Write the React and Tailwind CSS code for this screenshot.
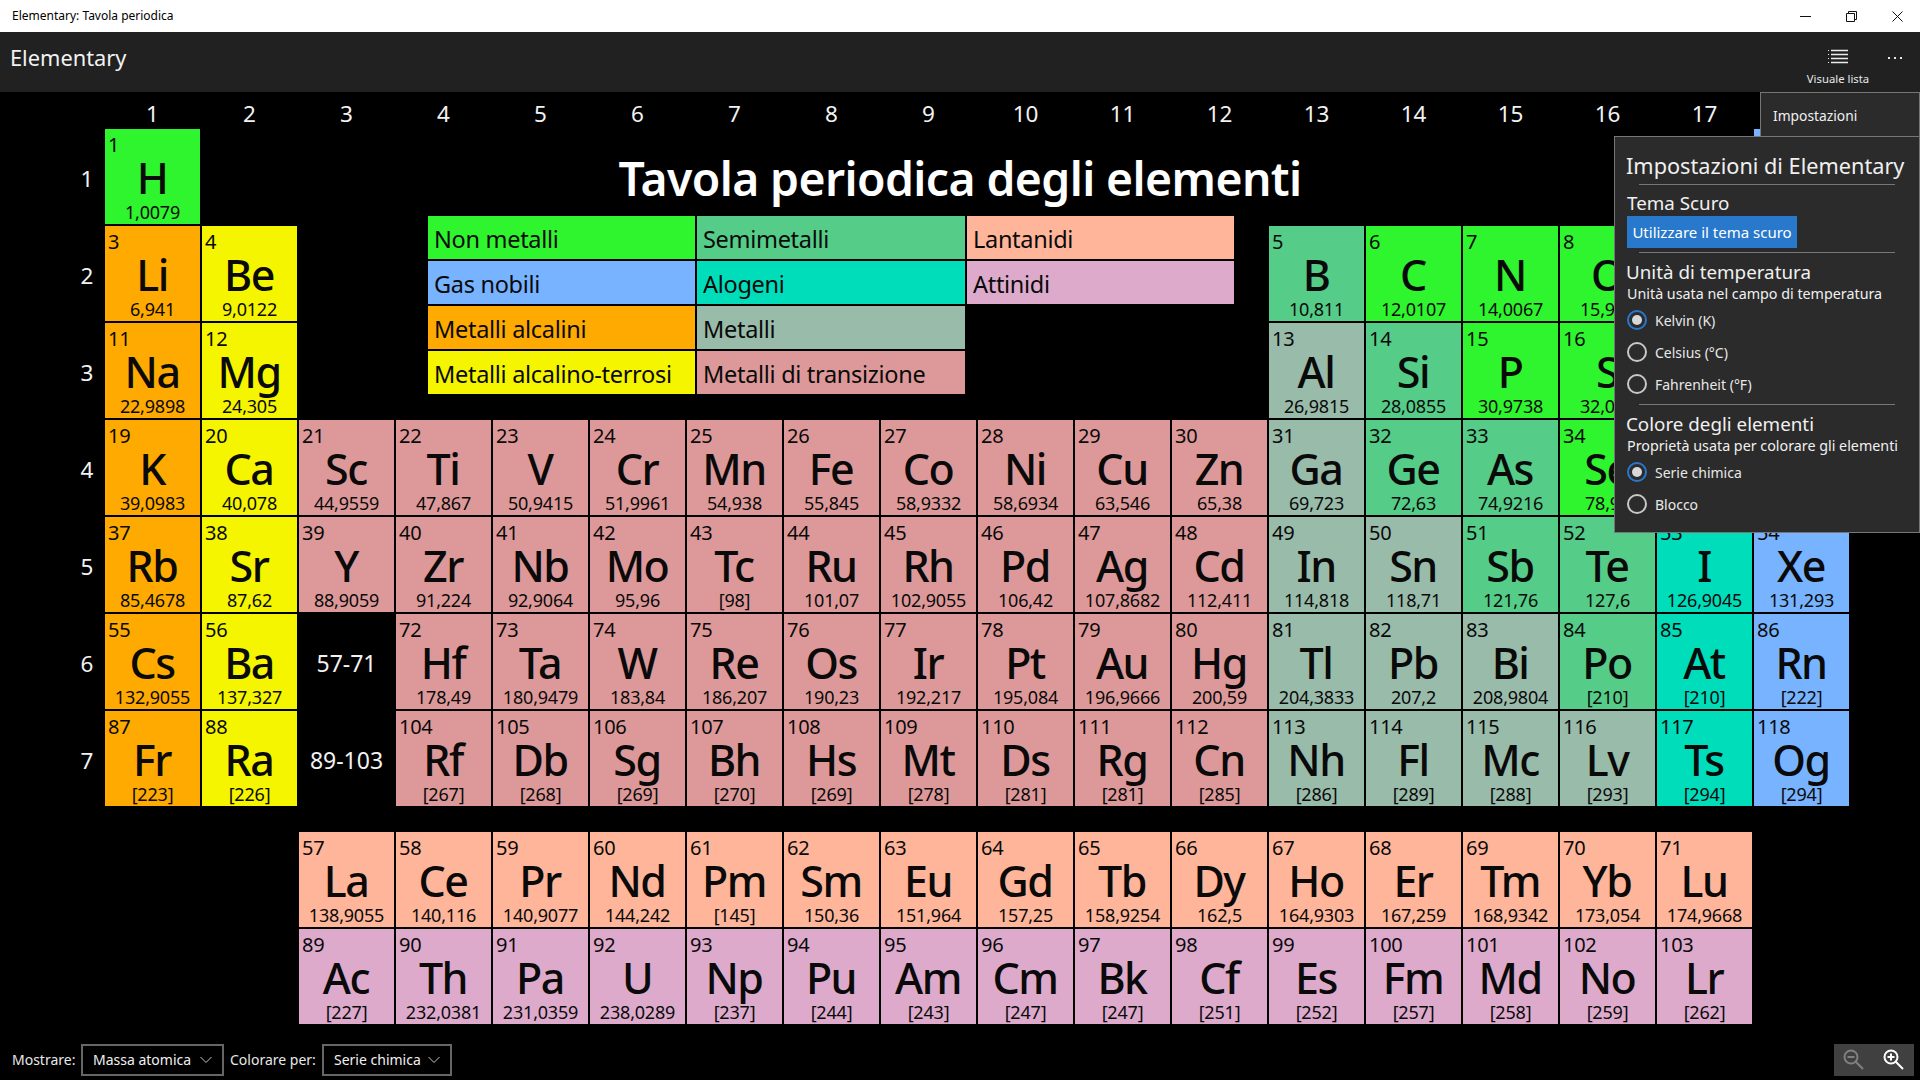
import React from 'react';

const BG = {
  n: 'bg-[#2ff52f]', g: 'bg-[#77b3ff]', a: 'bg-[#ffaa00]', e: 'bg-[#f5f500]',
  s: 'bg-[#55cc88]', h: 'bg-[#00ddbb]', m: 'bg-[#99bbaa]', t: 'bg-[#dd9999]',
  l: 'bg-[#ffb599]', c: 'bg-[#ddaacc]',
};

// [grid row, start column, first atomic number, "Sym mass cat|..."]
const BLOCKS = [
  [1, 1, 1, 'H 1,0079 n'],
  [1, 18, 2, 'He 4,0026 g'],
  [2, 1, 3, 'Li 6,941 a|Be 9,0122 e'],
  [2, 13, 5, 'B 10,811 s|C 12,0107 n|N 14,0067 n|O 15,999 n|F 18,9984 h|Ne 20,1797 g'],
  [3, 1, 11, 'Na 22,9898 a|Mg 24,305 e'],
  [3, 13, 13, 'Al 26,9815 m|Si 28,0855 s|P 30,9738 n|S 32,065 n|Cl 35,453 h|Ar 39,948 g'],
  [4, 1, 19, 'K 39,0983 a|Ca 40,078 e|Sc 44,9559 t|Ti 47,867 t|V 50,9415 t|Cr 51,9961 t|Mn 54,938 t|Fe 55,845 t|Co 58,9332 t|Ni 58,6934 t|Cu 63,546 t|Zn 65,38 t|Ga 69,723 m|Ge 72,63 s|As 74,9216 s|Se 78,96 n|Br 79,904 h|Kr 83,798 g'],
  [5, 1, 37, 'Rb 85,4678 a|Sr 87,62 e|Y 88,9059 t|Zr 91,224 t|Nb 92,9064 t|Mo 95,96 t|Tc [98] t|Ru 101,07 t|Rh 102,9055 t|Pd 106,42 t|Ag 107,8682 t|Cd 112,411 t|In 114,818 m|Sn 118,71 m|Sb 121,76 s|Te 127,6 s|I 126,9045 h|Xe 131,293 g'],
  [6, 1, 55, 'Cs 132,9055 a|Ba 137,327 e'],
  [6, 4, 72, 'Hf 178,49 t|Ta 180,9479 t|W 183,84 t|Re 186,207 t|Os 190,23 t|Ir 192,217 t|Pt 195,084 t|Au 196,9666 t|Hg 200,59 t|Tl 204,3833 m|Pb 207,2 m|Bi 208,9804 m|Po [210] s|At [210] h|Rn [222] g'],
  [7, 1, 87, 'Fr [223] a|Ra [226] e'],
  [7, 4, 104, 'Rf [267] t|Db [268] t|Sg [269] t|Bh [270] t|Hs [269] t|Mt [278] t|Ds [281] t|Rg [281] t|Cn [285] t|Nh [286] m|Fl [289] m|Mc [288] m|Lv [293] m|Ts [294] h|Og [294] g'],
  [9, 3, 57, 'La 138,9055 l|Ce 140,116 l|Pr 140,9077 l|Nd 144,242 l|Pm [145] l|Sm 150,36 l|Eu 151,964 l|Gd 157,25 l|Tb 158,9254 l|Dy 162,5 l|Ho 164,9303 l|Er 167,259 l|Tm 168,9342 l|Yb 173,054 l|Lu 174,9668 l'],
  [10, 3, 89, 'Ac [227] c|Th 232,0381 c|Pa 231,0359 c|U 238,0289 c|Np [237] c|Pu [244] c|Am [243] c|Cm [247] c|Bk [247] c|Cf [251] c|Es [252] c|Fm [257] c|Md [258] c|No [259] c|Lr [262] c'],
];

const ELEMENTS = BLOCKS.flatMap(([row, col, num, s]) =>
  s.split('|').map((item, i) => {
    const [sym, mass, cat] = item.split(' ');
    return { row, col: col + i, num: num + i, sym, mass, cat };
  })
);

const LEGEND = [
  ['Non metalli', 'n'], ['Semimetalli', 's'], ['Lantanidi', 'l'],
  ['Gas nobili', 'g'], ['Alogeni', 'h'], ['Attinidi', 'c'],
  ['Metalli alcalini', 'a'], ['Metalli', 'm'], null,
  ['Metalli alcalino-terrosi', 'e'], ['Metalli di transizione', 't'], null,
];

function Cell({ e }) {
  return (
    <div
      className={`h-[95px] w-[95px] overflow-hidden text-[#0a0a0a] ${BG[e.cat]}`}
      style={{ gridColumn: e.col + 1, gridRow: e.row + 1 }}
    >
      <div className="h-[27px] pt-[6px] pl-[3px] text-[20px] leading-[20px] tracking-[-0.3px]">{e.num}</div>
      <div className="h-[44px] pr-[1px] text-center text-[43px] leading-[44px] tracking-[-1.5px] font-[500]">{e.sym}</div>
      <div className="mt-[2px] h-[20px] text-center text-[18px] leading-[20px] whitespace-nowrap tracking-[-0.2px]">{e.mass}</div>
    </div>
  );
}

function Radio({ on, children }) {
  return (
    <div className="flex h-[32px] items-center gap-[8px]">
      <span className={`flex h-[20px] w-[20px] items-center justify-center rounded-full border-2 ${on ? 'border-[#2878cc]' : 'border-[#c8c8c8]'}`}>
        {on && <span className="h-[10px] w-[10px] rounded-full bg-[#d8d8d8]" />}
      </span>
      <span className="text-[14px] text-[#e8e8e8]">{children}</span>
    </div>
  );
}

function Divider({ className }) {
  return <div className={`mx-[12px] h-px bg-[#767676] ${className}`} />;
}

function Select({ width, children }) {
  return (
    <div className={`flex h-[32px] items-center justify-between border-2 border-[#666666] pl-[10px] pr-[10px] pb-[1px] text-[14px] text-[#f0f0f0] ${width}`}>
      <span>{children}</span>
      <svg width="12" height="8" viewBox="0 0 12 8" fill="none" stroke="#c4c4c4" strokeWidth="1">
        <path d="M0.5 1 L6 6.5 L11.5 1" />
      </svg>
    </div>
  );
}

export default function App() {
  return (
    <div className="relative flex h-screen w-screen flex-col overflow-hidden bg-black text-white font-['Noto_Sans',sans-serif]">
      {/* Title bar */}
      <div className="flex h-[32px] shrink-0 items-center justify-between bg-white pl-[12px] text-[12px] text-black">
        <span>Elementary: Tavola periodica</span>
        <div className="flex items-center">
          <svg width="11" height="11" viewBox="0 0 11 11" className="mr-[35px]" stroke="#111" fill="none"><path d="M0 5.5 H11" /></svg>
          <svg width="11" height="11" viewBox="0 0 11 11" className="mr-[35px]" stroke="#111" fill="none"><path d="M0.5 2.5 H8.5 V10.5 H0.5 Z M2.5 2.5 V0.5 H10.5 V8.5 H8.5" /></svg>
          <svg width="11" height="11" viewBox="0 0 11 11" className="mr-[17px]" stroke="#111" fill="none"><path d="M0.5 0.5 L10.5 10.5 M10.5 0.5 L0.5 10.5" /></svg>
        </div>
      </div>

      {/* Command bar */}
      <div className="flex h-[60px] shrink-0 items-start justify-between bg-[#212121] pl-[10px]">
        <span className="mt-[11px] text-[21.8px] leading-[30px] text-[#f2f2f2]">Elementary</span>
        <div className="flex items-start">
          <div className="flex w-[100px] flex-col items-center pt-[17px]">
            <svg width="20" height="16" viewBox="0 0 20 16" stroke="#ececec" fill="none">
              <path d="M0 1.5 H1 M0 5.5 H1 M0 9.5 H1 M0 13.5 H1" strokeWidth="1" />
              <path d="M3 1.5 H20 M3 5.5 H20 M3 9.5 H20 M3 13.5 H20" strokeWidth="1.6" />
            </svg>
            <span className="mt-[6px] text-[11.3px] leading-[16px] text-[#e8e8e8]">Visuale lista</span>
          </div>
          <svg width="16" height="4" viewBox="0 0 16 4" fill="#e8e8e8" className="mt-[24px] mr-[16px]">
            <rect x="0" y="1" width="2" height="2" /><rect x="6" y="1" width="2" height="2" /><rect x="12" y="1" width="2" height="2" />
          </svg>
        </div>
      </div>

      {/* Periodic table */}
      <div className="grid grid-cols-[32px_repeat(18,95px)] grid-rows-[35px_repeat(7,95px)_22px_repeat(2,95px)] gap-[2px] pl-[71px]">
        {Array.from({ length: 18 }, (_, i) => (
          <div key={i} className="flex items-center justify-center pt-[8px] text-[22.5px] text-[#f2f2f2]" style={{ gridColumn: i + 2, gridRow: 1 }}>{i + 1}</div>
        ))}
        {Array.from({ length: 7 }, (_, i) => (
          <div key={i} className="flex items-center justify-center pt-[5px] text-[22.5px] text-[#f2f2f2]" style={{ gridColumn: 1, gridRow: i + 2 }}>{i + 1}</div>
        ))}

        <div className="col-[1/20] row-[2] flex justify-center pt-[20px]">
          <h1 className="text-[46.3px] leading-[60px] font-semibold text-white tracking-[-0.6px]">Tavola periodica degli elementi</h1>
        </div>

        <div className="col-[5/14] row-[2/5] flex items-end justify-center pb-[24px] pr-[1px]">
          <div className="grid grid-cols-[267px_268px_267px] gap-[2px]">
            {LEGEND.map((l, i) =>
              l ? (
                <div key={i} className={`flex h-[43px] items-center pl-[6px] pt-[2px] text-[23.5px] leading-[28px] text-[#0a0a0a] tracking-[-0.3px] ${BG[l[1]]}`}>{l[0]}</div>
              ) : (
                <div key={i} />
              )
            )}
          </div>
        </div>

        {ELEMENTS.map((e) => <Cell key={e.num} e={e} />)}

        <div className="col-[4] row-[7] flex items-center justify-center pt-[4px] text-[23px] text-[#f2f2f2]">57-71</div>
        <div className="col-[4] row-[8] flex items-center justify-center pt-[4px] text-[23px] text-[#f2f2f2]">89-103</div>
      </div>

      {/* Bottom bar */}
      <div className="mt-auto flex h-[40px] shrink-0 items-start pl-[12px] pr-[6px] pt-[4px]">
        <span className="flex h-[32px] w-[69px] items-center pb-[1px] text-[14px] text-[#e8e8e8]">Mostrare:</span>
        <Select width="w-[143px]">Massa atomica</Select>
        <span className="ml-[6px] flex h-[32px] w-[92px] items-center pb-[1px] text-[14px] text-[#e8e8e8]">Colorare per:</span>
        <Select width="w-[130px]">Serie chimica</Select>
        <div className="ml-auto flex h-[32px] w-[80px] items-center bg-[#404040]">
          <svg width="80" height="32" viewBox="0 0 80 32" fill="none">
            <g stroke="#808080">
              <circle cx="17" cy="13" r="6.5" strokeWidth="2" />
              <path d="M21.5 17.5 L29 25" strokeWidth="2" />
              <path d="M13.5 13 H20.5" strokeWidth="2" />
            </g>
            <g stroke="#ffffff">
              <circle cx="57" cy="13" r="6.5" strokeWidth="2" />
              <path d="M61.5 17.5 L69 25" strokeWidth="2" />
              <path d="M53.5 13 H60.5 M57 9.5 V16.5" strokeWidth="2" />
            </g>
          </svg>
        </div>
      </div>

      {/* Overflow menu */}
      <div className="absolute left-[1760px] top-[92px] h-[46px] w-[160px] border border-[#767676] bg-[#2b2b2b] pl-[12px] pt-[13px] text-[13.8px] leading-[20px] text-[#f0f0f0]">
        Impostazioni
      </div>

      {/* Settings flyout */}
      <div className="absolute left-[1614px] top-[136px] h-[397px] w-[306px] border border-[#767676] bg-[#2b2b2b] px-[12px] text-[#f0f0f0]">
        <div className="mt-[13px] ml-[-1px] whitespace-nowrap text-[21.7px] leading-[32px] text-[#f0f0f0]">Impostazioni di Elementary</div>
        <Divider className="mt-[2px]" />
        <div className="mt-[6px] h-[25px] text-[18.8px] leading-[25px]">Tema Scuro</div>
        <div className="flex h-[32px] w-[170px] items-center justify-center bg-[#2878cc] text-[15px] text-white">Utilizzare il tema scuro</div>
        <Divider className="mt-[4px]" />
        <div className="mt-[6px] ml-[-1px] text-[18.8px] leading-[26px]">Unità di temperatura</div>
        <div className="pb-[1px] h-[20px] text-[14.3px] leading-[18px] whitespace-nowrap">Unità usata nel campo di temperatura</div>
        <div className="mt-[-1px] flex flex-col">
          <Radio on>Kelvin (K)</Radio>
          <Radio>Celsius (°C)</Radio>
          <Radio>Fahrenheit (°F)</Radio>
        </div>
        <Divider className="mt-[4px]" />
        <div className="mt-[6px] ml-[-1px] text-[18.8px] leading-[26px]">Colore degli elementi</div>
        <div className="pb-[1px] h-[20px] text-[14.3px] leading-[18px] whitespace-nowrap">Proprietà usata per colorare gli elementi</div>
        <div className="mt-[-1px] flex flex-col">
          <Radio on>Serie chimica</Radio>
          <Radio>Blocco</Radio>
        </div>
      </div>
    </div>
  );
}
